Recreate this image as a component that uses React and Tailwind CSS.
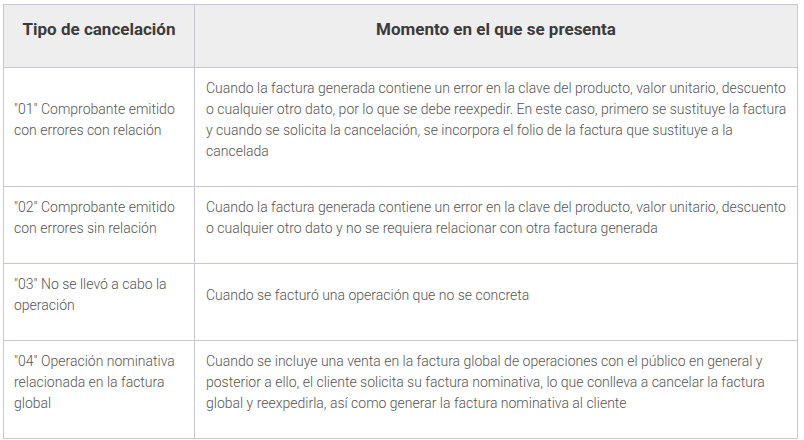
export default function App() {
  const rows = [
    {
      a: '"01" Comprobante emitido con errores con relación',
      b: 'Cuando la factura generada contiene un error en la clave del producto, valor unitario, descuento o cualquier otro dato, por lo que se debe reexpedir. En este caso, primero se sustituye la factura y cuando se solicita la cancelación, se incorpora el folio de la factura que sustituye a la cancelada',
    },
    {
      a: '"02" Comprobante emitido con errores sin relación',
      b: 'Cuando la factura generada contiene un error en la clave del producto, valor unitario, descuento o cualquier otro dato y no se requiera relacionar con otra factura generada',
    },
    {
      a: '"03" No se llevó a cabo la operación',
      b: 'Cuando se facturó una operación que no se concreta',
    },
    {
      a: '"04" Operación nominativa relacionada en la factura global',
      b: 'Cuando se incluye una venta en la factura global de operaciones con el público en general y posterior a ello, el cliente solicita su factura nominativa, lo que conlleva a cancelar la factura global y reexpedirla, así como generar la factura nominativa al cliente',
    },
  ];
  return (
    <div className="w-[804px] h-[440px] bg-white pl-[3px] pt-[4px]" style={{ fontFamily: 'Roboto, "Liberation Sans", sans-serif' }}>
      <table className="w-[795px] border-collapse table-fixed">
        <colgroup>
          <col className="w-[191px]" />
          <col />
        </colgroup>
        <thead>
          <tr className="bg-[#eeeeee]">
            <th className="border border-[#c8c6d8] px-[10px] py-[10px] align-middle text-center text-[17px] font-bold text-[#3b3b3b] leading-[24px] h-[63px]">
              <p className="mb-[15px]">Tipo de cancelación</p>
            </th>
            <th className="border border-[#c8c6d8] px-[10px] py-[10px] align-middle text-center text-[17px] font-bold text-[#3b3b3b] leading-[24px]">
              <p className="mb-[15px]">Momento en el que se presenta</p>
            </th>
          </tr>
        </thead>
        <tbody>
          {rows.map((r, i) => (
            <tr key={i}>
              <td className="border border-[#c8c6d8] px-[10px] py-[10px] align-middle text-[14px] font-light leading-[21px] text-[#555555]">
                <p className="mb-[14px]">{r.a}</p>
              </td>
              <td className="border border-[#c8c6d8] pl-[11px] pr-[6px] py-[10px] align-middle text-[14px] font-light leading-[21px] text-[#555555]">
                <p className="mb-[14px]">{r.b}</p>
              </td>
            </tr>
          ))}
        </tbody>
      </table>
    </div>
  );
}
